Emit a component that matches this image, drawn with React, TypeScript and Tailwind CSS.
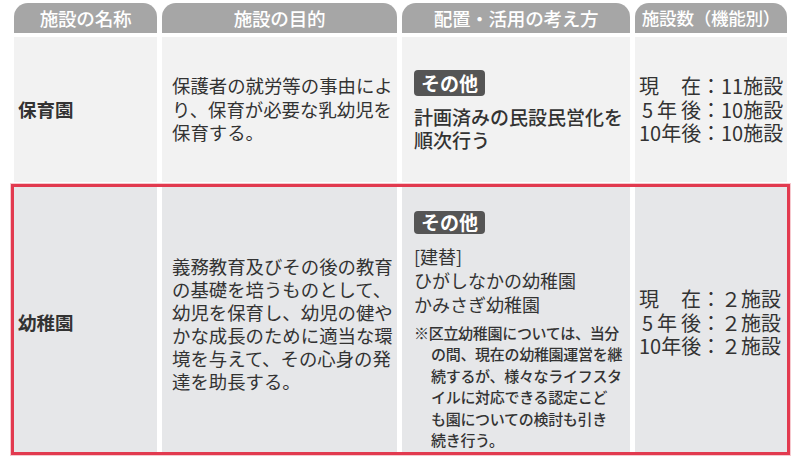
const headers = ['施設の名称', '施設の目的', '配置・活用の考え方', '施設数（機能別）'];

function Badge({ className }: { className: string }) {
  return (
    <span
      className={`inline-flex items-center rounded-[4px] bg-[#555555] px-[7px] text-[19px] font-bold text-white ${className}`}
    >
      その他
    </span>
  );
}

function Lines({ lines, className }: { lines: string[]; className: string }) {
  return (
    <div className={className}>
      {lines.map((l, i) => (
        <div key={i} className="whitespace-nowrap">
          {l}
        </div>
      ))}
    </div>
  );
}

function Counts({ values }: { values: string[] }) {
  const labels = [['現', '在'], ['5', '年', '後'], ['10年後']];
  return (
    <div className="text-[20px] leading-[23.5px]">
      {labels.map((parts, i) => (
        <div key={i} className="flex whitespace-nowrap">
          <span className="flex w-[62px] justify-between">
            {parts.map((p, j) => (
              <span key={j} className={p === '5' ? 'pl-[3px]' : ''}>
                {p}
              </span>
            ))}
          </span>
          <span className="w-[20px] text-center">：</span>
          <span>{values[i]}</span>
        </div>
      ))}
    </div>
  );
}

export default function App() {
  return (
    <div className="h-[465px] w-[800px] bg-white pl-[14px] pt-[3px] font-['Noto_Sans_CJK_JP',sans-serif] text-[#333333]">
      <div className="grid grid-cols-[143px_235px_228px_152px] gap-x-[5px]">
        {headers.map((h, i) => (
          <div
            key={h}
            className={`flex h-[30px] items-center justify-center whitespace-nowrap rounded-t-[14px] bg-[#a6a6a6] font-medium tracking-[-0.3px] text-white ${
              i === 3 ? 'text-[17.6px]' : 'text-[18.6px]'
            }`}
          >
            {h}
          </div>
        ))}
      </div>

      <div className="mt-[4px] grid h-[145px] grid-cols-[143px_235px_228px_152px] gap-x-[5px]">
        <div className="flex items-center bg-[#f2f2f2] pl-[4px] text-[18.5px] font-bold">保育園</div>
        <div className="flex items-center bg-[#f2f2f2] pl-[10px]">
          <Lines
            className="text-[18.4px] leading-[23.5px]"
            lines={['保護者の就労等の事由によ', 'り、保育が必要な乳幼児を', '保育する。']}
          />
        </div>
        <div className="flex flex-col justify-center bg-[#f2f2f2] pl-[12px] pt-[2px]">
          <Badge className="h-[26px] self-start" />
          <Lines
            className="mt-[9px] text-[19px] font-medium leading-[23px]"
            lines={['計画済みの民設民営化を', '順次行う']}
          />
        </div>
        <div className="flex items-center bg-[#f2f2f2] pl-[4px]">
          <Counts values={['11施設', '10施設', '10施設']} />
        </div>
      </div>

      <div className="ml-[-3px] mt-[2px] w-[779px] border-[3px] border-[#e23a4f] bg-white shadow-[0_0_0_1px_#f6c9cf]">
        <div className="grid h-[265px] grid-cols-[143px_235px_228px_152px] gap-x-[5px]">
          <div className="flex items-center bg-[#e6e7e9] pl-[4px] pt-[6px] text-[18.5px] font-bold">幼稚園</div>
          <div className="flex items-center bg-[#e6e7e9] pl-[10px] pt-[8px]">
            <Lines
              className="text-[18.4px] leading-[23px]"
              lines={[
                '義務教育及びその後の教育',
                'の基礎を培うものとして、',
                '幼児を保育し、幼児の健や',
                'かな成長のために適当な環',
                '境を与えて、その心身の発',
                '達を助長する。',
              ]}
            />
          </div>
          <div className="flex flex-col bg-[#e6e7e9] pl-[12px] pt-[24px]">
            <Badge className="h-[23px] self-start" />
            <Lines
              className="mt-[10px] text-[18px] leading-[24px]"
              lines={['[建替]', 'ひがしなかの幼稚園', 'かみさぎ幼稚園']}
            />
            <div className="mt-[6px] text-[15px] font-medium leading-[21.4px] tracking-[-0.3px]">
              {[
                '※区立幼稚園については、当分',
                'の間、現在の幼稚園運営を継',
                '続するが、様々なライフスタ',
                'イルに対応できる認定こど',
                'も園についての検討も引き',
                '続き行う。',
              ].map((l, i) => (
                <div key={i} className={`whitespace-nowrap ${i > 0 ? 'pl-[17px]' : ''}`}>
                  {l}
                </div>
              ))}
            </div>
          </div>
          <div className="flex items-center bg-[#e6e7e9] pl-[4px] pt-[6px]">
            <Counts values={['２施設', '２施設', '２施設']} />
          </div>
        </div>
      </div>
    </div>
  );
}
